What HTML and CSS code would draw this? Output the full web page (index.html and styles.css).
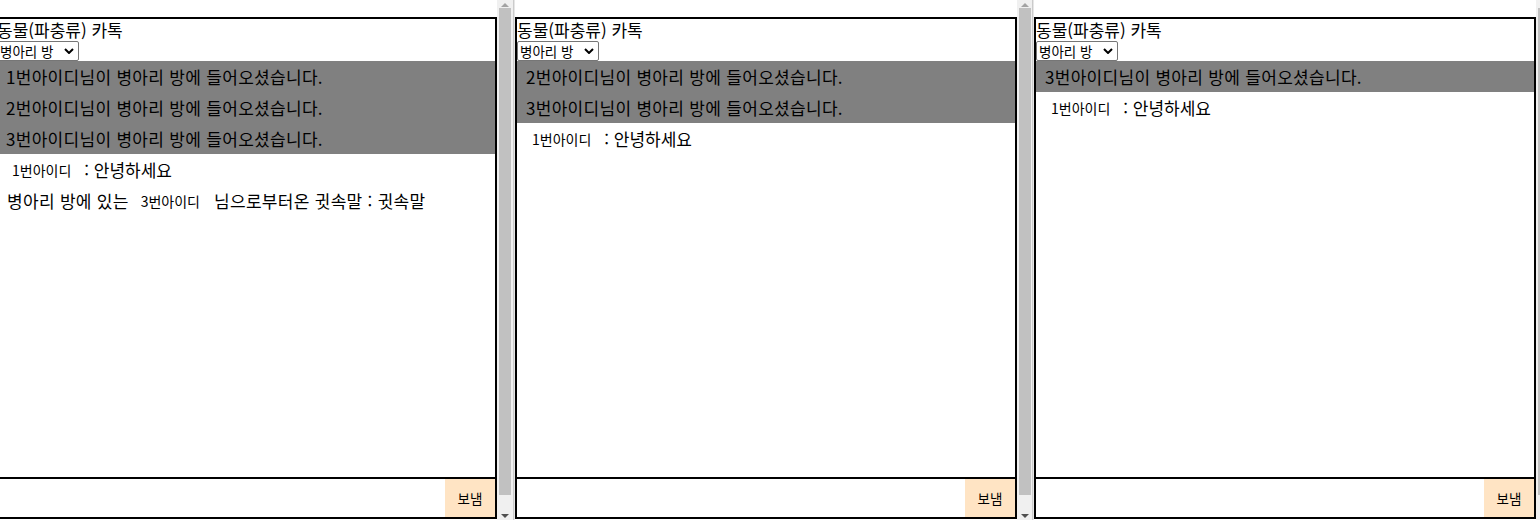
FILE: index.html
```html
<!DOCTYPE html>
<html lang="ko">
<head>
<meta charset="utf-8">
<title>동물(파충류) 카톡</title>
<link rel="stylesheet" href="styles.css">
</head>
<body>
<div class="desk">

  <div class="win">
    <div class="edge"></div>
    <div class="chat">
      <div class="title">동물(파충류) 카톡</div>
      <div class="room"><span class="select">병아리 방<svg class="chev" viewBox="0 0 10 6" width="10" height="6"><path d="M1 1 L5 5 L9 1" fill="none" stroke="#000" stroke-width="2"/></svg></span></div>
      <div class="log">
        <div class="notice">1번아이디님이 병아리 방에 들어오셨습니다.</div>
        <div class="notice">2번아이디님이 병아리 방에 들어오셨습니다.</div>
        <div class="notice">3번아이디님이 병아리 방에 들어오셨습니다.</div>
        <div class="msg"><span class="name">1번아이디</span><span class="text">: 안녕하세요</span></div>
        <div class="whisper"><span class="wtext">병아리 방에 있는</span><span class="name">3번아이디</span><span class="wtext">님으로부터온 귓속말 : 귓속말</span></div>
      </div>
      <div class="composer"><div class="input"></div><button class="send">보냄</button></div>
    </div>
    <div class="scrollbar">
      <div class="sb-btn"><span class="tri-up"></span></div>
      <div class="sb-track"><div class="thumb"></div></div>
      <div class="sb-btn down"><span class="tri-down"></span></div>
    </div>
  </div>

  <div class="win">
    <div class="edge"></div>
    <div class="chat">
      <div class="title">동물(파충류) 카톡</div>
      <div class="room"><span class="select">병아리 방<svg class="chev" viewBox="0 0 10 6" width="10" height="6"><path d="M1 1 L5 5 L9 1" fill="none" stroke="#000" stroke-width="2"/></svg></span></div>
      <div class="log">
        <div class="notice">2번아이디님이 병아리 방에 들어오셨습니다.</div>
        <div class="notice">3번아이디님이 병아리 방에 들어오셨습니다.</div>
        <div class="msg"><span class="name">1번아이디</span><span class="text">: 안녕하세요</span></div>
      </div>
      <div class="composer"><div class="input"></div><button class="send">보냄</button></div>
    </div>
    <div class="scrollbar">
      <div class="sb-btn"><span class="tri-up"></span></div>
      <div class="sb-track"><div class="thumb"></div></div>
      <div class="sb-btn down"><span class="tri-down"></span></div>
    </div>
  </div>

  <div class="win">
    <div class="edge"></div>
    <div class="chat">
      <div class="title">동물(파충류) 카톡</div>
      <div class="room"><span class="select">병아리 방<svg class="chev" viewBox="0 0 10 6" width="10" height="6"><path d="M1 1 L5 5 L9 1" fill="none" stroke="#000" stroke-width="2"/></svg></span></div>
      <div class="log">
        <div class="notice">3번아이디님이 병아리 방에 들어오셨습니다.</div>
        <div class="msg"><span class="name">1번아이디</span><span class="text">: 안녕하세요</span></div>
      </div>
      <div class="composer"><div class="input"></div><button class="send">보냄</button></div>
    </div>
    <div class="scrollbar">
      <div class="sb-btn"><span class="tri-up"></span></div>
      <div class="sb-track"><div class="thumb"></div></div>
      <div class="sb-btn down"><span class="tri-down"></span></div>
    </div>
  </div>

</div>
</body>
</html>
```

FILE: styles.css
```css
html, body {
  margin: 0;
  padding: 0;
  background: #fff;
  overflow: hidden;
}
body {
  font-family: "Noto Sans CJK KR", "Noto Sans", sans-serif;
  color: #000;
}
.desk {
  display: flex;
  margin-left: -7px;
  height: 520px;
  overflow: hidden;
}
.win {
  flex: none;
  width: 520px;
  height: 520px;
  display: flex;
  align-items: flex-start;
  overflow: hidden;
}
.win:last-child {
  margin-left: -1px;
}
.edge {
  flex: none;
  width: 2px;
  align-self: stretch;
  background: linear-gradient(to right, #bdbdbd, #f4f4f4);
}
.chat {
  flex: none;
  box-sizing: border-box;
  width: 502px;
  height: 502px;
  margin-top: 17px;
  border: 2px solid #000;
  display: flex;
  flex-direction: column;
}
.title {
  height: 22px;
  line-height: 22px;
  font-size: 17px;
  white-space: nowrap;
}
.room {
  height: 20px;
  display: flex;
  align-items: stretch;
}
.select {
  box-sizing: border-box;
  width: 82px;
  height: 20px;
  border: 1px solid #767676;
  border-radius: 2px;
  font-size: 13.5px;
  display: flex;
  align-items: center;
  justify-content: space-between;
  padding: 0 4px 0 2px;
  background: #fff;
  white-space: nowrap;
}
.chev {
  display: block;
}
.log {
  flex: 1;
  overflow: hidden;
}
.notice {
  background: #808080;
  height: 31px;
  line-height: 31px;
  padding-left: 9px;
  font-size: 17px;
  letter-spacing: 0.3px;
  white-space: nowrap;
}
.msg, .whisper {
  height: 31px;
  display: flex;
  align-items: center;
  white-space: nowrap;
}
.msg {
  padding-left: 15px;
}
.whisper {
  padding-left: 10px;
}
.name {
  font-size: 14px;
}
.msg .name {
  margin-right: 13px;
}
.text {
  font-size: 17px;
}
.wtext {
  font-size: 17px;
  letter-spacing: 0.3px;
}
.whisper .name {
  margin: 0 14px 0 12px;
}
.composer {
  flex: none;
  height: 38px;
  border-top: 2px solid #000;
  display: flex;
}
.input {
  flex: 1;
}
.send {
  flex: none;
  width: 50px;
  height: 38px;
  border: none;
  margin: 0;
  padding: 0;
  background: #ffe4c4;
  font-family: inherit;
  font-size: 13.5px;
  color: #000;
}
.scrollbar {
  flex: none;
  width: 16px;
  margin-top: -9px;
  height: 534px;
  background: #f0f0f0;
  display: flex;
  flex-direction: column;
}
.sb-btn {
  flex: none;
  height: 17px;
  display: flex;
  align-items: center;
  justify-content: center;
}
.sb-track {
  flex: 1;
  padding: 0 2px 13px;
}
.thumb {
  height: 487px;
  background: #c1c1c1;
}
.tri-up {
  width: 0;
  height: 0;
  border-left: 4px solid transparent;
  border-right: 4px solid transparent;
  border-bottom: 4px solid #a3a3a3;
  margin-top: 10px;
}
.tri-down {
  width: 0;
  height: 0;
  border-left: 4px solid transparent;
  border-right: 4px solid transparent;
  border-top: 4px solid #505050;
  margin-top: -1px;
}
```
